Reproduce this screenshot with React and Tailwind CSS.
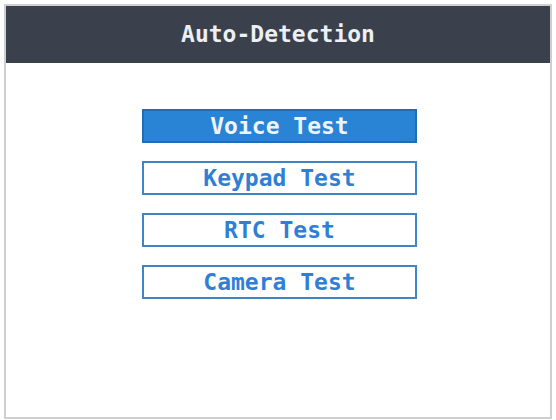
export default function App() {
  const items = [
    { label: "Voice Test", active: true },
    { label: "Keypad Test" },
    { label: "RTC Test" },
    { label: "Camera Test" },
  ];
  const mono = { fontFamily: '"DejaVu Sans Mono", "Liberation Mono", monospace' };
  return (
    <div className="w-[556px] h-[420px] bg-white p-[4px]">
      <div className="h-[415px] border-2 border-[#cfcfcf] bg-white flex flex-col">
        <div className="h-[57px] bg-[#3b404d] flex items-center justify-center">
          <span className="text-[23px] font-bold text-[#eceff3] leading-none" style={mono}>
            Auto-Detection
          </span>
        </div>
        <div className="flex flex-col items-center gap-[18px] pt-[46px] pl-[3px]">
          {items.map((it) => (
            <div
              key={it.label}
              className={
                it.active
                  ? "w-[275px] h-[34px] border-2 border-[#1f6db5] bg-[#2a84d6] flex items-center justify-center"
                  : "w-[275px] h-[34px] border-2 border-[#3f86c9] bg-white flex items-center justify-center"
              }
            >
              <span
                className={
                  it.active
                    ? "text-[23px] font-bold text-[#eef4fb] leading-none"
                    : "text-[23px] font-bold text-[#2f7fd6] leading-none"
                }
                style={mono}
              >
                {it.label}
              </span>
            </div>
          ))}
        </div>
      </div>
    </div>
  );
}
